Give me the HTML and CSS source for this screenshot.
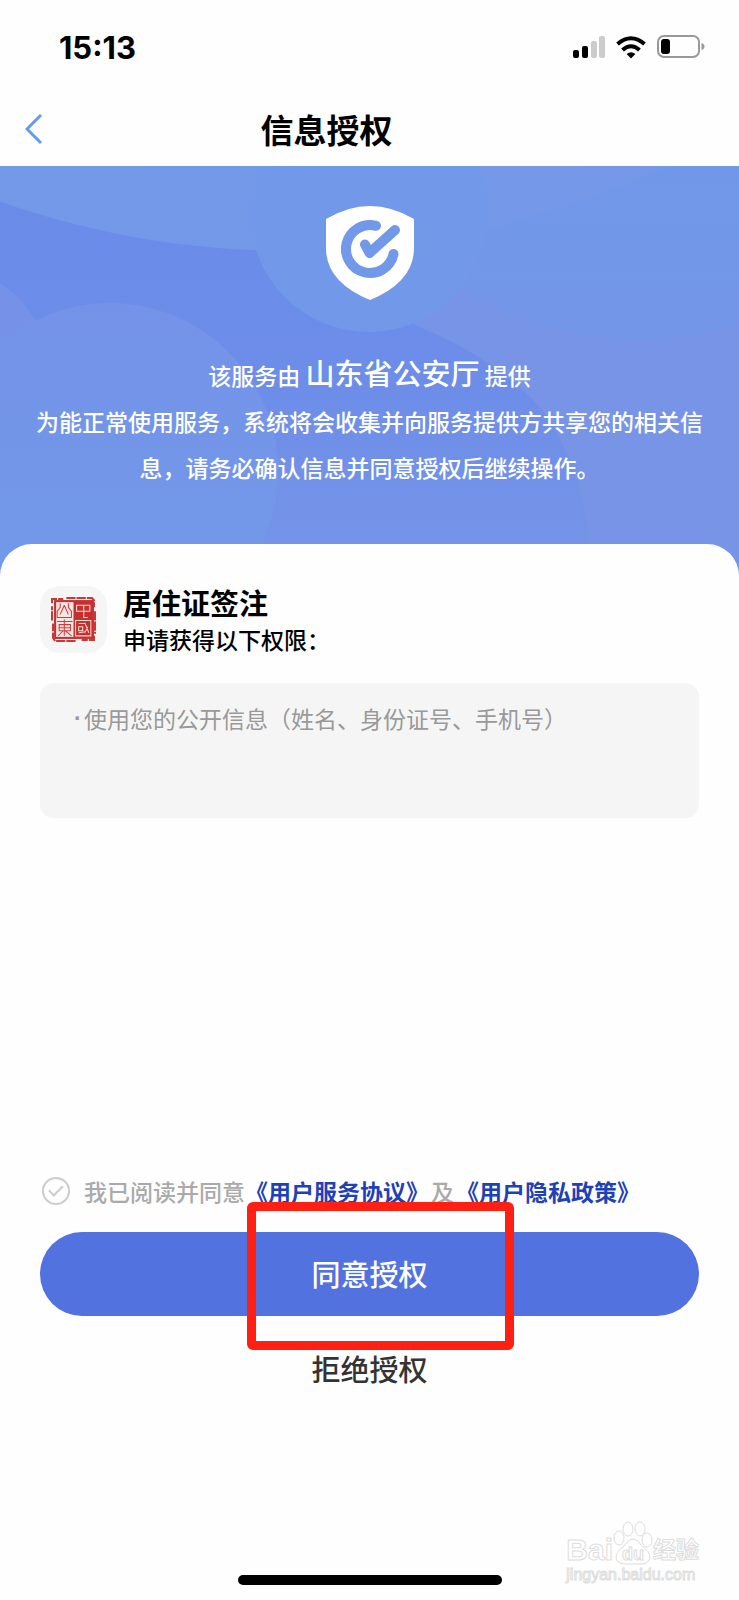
FILE: index.html
```
<!DOCTYPE html>
<html lang="zh-CN">
<head>
    <meta charset="utf-8">
    <meta name="viewport" content="width=device-width, initial-scale=1">
    <title>信息授权</title>
    <link rel="stylesheet" href="styles.css">
</head>
<body>

<div class="statusbar">
    <span class="time">15:13</span>
    <div class="status-icons">
        <svg class="signal" viewBox="0 0 32 22" aria-hidden="true">
            <rect x="0" y="14" width="6" height="8" rx="2"/>
            <rect x="9" y="10" width="6" height="12" rx="2"/>
            <rect class="off" x="18" y="5" width="6" height="17" rx="2"/>
            <rect class="off" x="26" y="0" width="6" height="22" rx="2"/>
        </svg>
        <svg class="wifi" viewBox="0 0 30 23" aria-hidden="true">
            <path d="M1.500 8Q15 -3.500 28.500 8" />
            <path d="M6.500 14Q15 6.500 23.500 14" />
            <path class="dot" d="M15 22.500L10.600 18Q15 14.500 19.400 18Z" />
        </svg>
        <svg class="battery" viewBox="0 0 48 24" aria-hidden="true">
            <rect class="case" x="1" y="1" width="41" height="21" rx="6"/>
            <rect x="4" y="4" width="9" height="15" rx="3"/>
            <path class="tip" d="M44.500 8Q47.500 9 47.500 11.500Q47.500 14 44.500 15Z"/>
        </svg>
    </div>
</div>

<header class="navbar">
    <button class="back" type="button" aria-label="返回">
        <svg viewBox="0 0 18 30"><path d="M16 1L2 15L16 29"/></svg>
    </button>
    <h1 class="title">信息授权</h1>
</header>

<section class="hero">
    <svg class="hero-bg" viewBox="0 0 739 412" preserveAspectRatio="xMidYMid slice" aria-hidden="true">
        <defs>
            <linearGradient id="band" x1="0" y1="0" x2="0" y2="1">
                <stop offset="0" stop-color="#6b8be8"/>
                <stop offset="0.5" stop-color="#6c8de8"/>
                <stop offset="1" stop-color="#7795e8"/>
            </linearGradient>
            <linearGradient id="ball" x1="0" y1="0" x2="0" y2="1">
                <stop offset="0" stop-color="#7493e8"/>
                <stop offset="1" stop-color="#7299e9"/>
            </linearGradient>
            <linearGradient id="sky" x1="0" y1="0" x2="1" y2="0">
                <stop offset="0" stop-color="#729ae9"/>
                <stop offset="1" stop-color="#7796e8"/>
            </linearGradient>
            <linearGradient id="right" x1="0" y1="0" x2="0" y2="1">
                <stop offset="0.480" stop-color="#7795e8"/>
                <stop offset="0.750" stop-color="#7098e9"/>
                <stop offset="1" stop-color="#7496e8"/>
            </linearGradient>
        </defs>
        <rect width="739" height="412" fill="#7794e7"/>
        <path d="M0 0H300L415 160Q500 195 542 245Q590 310 590 412H0Z" fill="url(#band)"/>
        <circle cx="-60" cy="210" r="110" fill="#7591e8"/>
        <circle cx="110" cy="306" r="168" fill="url(#ball)"/>
        <circle cx="640" cy="-160" r="334" fill="url(#right)"/>
        <circle cx="290" cy="-790" r="876" fill="url(#sky)"/>
        <circle cx="369" cy="48" r="119" fill="#7298e9"/>
    </svg>
    <svg class="shield" viewBox="0 0 88 94" aria-hidden="true">
        <path class="plate" d="M44 0Q66 0 88 13V42Q88 76 44 94Q0 76 0 42V13Q22 0 44 0Z"/>
        <path class="mark" d="M50 19.800A24 24 0 1 0 67.500 48"/>
        <path class="mark" d="M39 38.500L43.500 47L69 24"/>
    </svg>
    <p class="provider">该服务由 <strong>山东省公安厅</strong> 提供</p>
    <p class="notice">为能正常使用服务，系统将会收集并向服务提供方共享您的相关信息，请务必确认信息并同意授权后继续操作。</p>
</section>

<main class="sheet">
    <div class="service">
        <div class="service-icon">
            <svg viewBox="0 0 44 44" aria-hidden="true">
                <path class="frame" d="M1 6V2H12M15 1H40L42 3V10M43 14V36M42 38V42H30M24 43H4L2 40V26M1 23V9" />
                <rect class="red" x="3" y="3" width="39" height="38"/>
                <rect class="paper" x="5" y="5" width="17" height="34"/>
                <path class="ink" d="M9 6V10L6 14V20H20V14L17 10V6M13 8L9 17M13 8L17 17M6 24H21M13 22V38M8 27H19V33H8ZM8 30H19M12 33L7 38M14 33L20 38"/>
                <path class="cut" d="M25 8H38V14H25ZM32 8V20H36M24 23H39V38H24ZM27 26H33M27 29H31V33H27ZM27 35L34 34M33 25L37 35M36 29L33 35"/>
            </svg>
        </div>
        <div>
            <h2 class="service-name">居住证签注</h2>
            <p class="service-sub">申请获得以下权限：</p>
        </div>
    </div>

    <ul class="scopes">
        <li>使用您的公开信息（姓名、身份证号、手机号）</li>
    </ul>

    <div class="agree">
        <input type="checkbox" id="agree">
        <label for="agree">我已阅读并同意</label><a href="#">《用户服务协议》</a><span class="and">及</span><a href="#">《用户隐私政策》</a>
    </div>

    <div class="actions">
        <button class="btn accept" type="button">同意授权</button>
        <button class="btn refuse" type="button">拒绝授权</button>
        <div class="highlight"></div>
    </div>
</main>

<div class="watermark">
    <div class="wm-logo">
        <span>Bai</span>
        <span class="paw">
            <svg viewBox="0 0 40 44" aria-hidden="true">
                <ellipse cx="6" cy="17" rx="5" ry="7"/>
                <ellipse cx="15" cy="8" rx="5" ry="7"/>
                <ellipse cx="27" cy="8" rx="5" ry="7"/>
                <ellipse cx="34" cy="19" rx="5" ry="7"/>
                <path d="M20 18Q25 18 28 24Q37 31 37 36Q36 43 28 43H11Q3 42 3 36Q3 31 12 24Q15 18 20 18Z"/>
            </svg>
            <em>du</em>
        </span>
        <span class="wm-cn">经验</span>
    </div>
    <div class="wm-url">jingyan.baidu.com</div>
</div>
<div class="home-bar"></div>

</body>
</html>
```
FILE: styles.css
```
* {
    box-sizing: border-box;
}

body {
    margin: 0;
    min-height: 100vh;
    position: relative;
    display: flex;
    flex-direction: column;
    background-color: #fefefe;
    font-family: "Noto Sans CJK SC", sans-serif;
    font-size: 23px;
    font-weight: 500;
    color: #000;
}

h1, h2, p, ul {
    margin: 0;
    padding: 0;
}

button {
    border: none;
    padding: 0;
    background: none;
    font-family: inherit;
    font-weight: 500;
    cursor: pointer;
}

a {
    color: #1f41b6;
    text-decoration: none;
    font-weight: 700;
}

/* Status bar */
.statusbar {
    height: 94px;
    padding: 0 34px 0 59px;
    display: flex;
    justify-content: space-between;
    align-items: center;
}

.time {
    font-family: Inter, sans-serif;
    font-size: 31px;
    font-weight: 700;
}

.status-icons {
    display: flex;
    align-items: center;
    gap: 11px;
}

.signal {
    width: 32px;
    height: 22px;
}

.signal .off {
    fill: #ccc;
}

.wifi {
    width: 30px;
    height: 23px;
    fill: none;
    stroke: #000;
    stroke-width: 4;
}

.wifi .dot {
    fill: #000;
    stroke: none;
}

.battery {
    width: 48px;
    height: 24px;
}

.battery .case {
    fill: none;
    stroke: #999;
    stroke-width: 2;
}

.battery .tip {
    fill: #999;
}

/* Title bar */
.navbar {
    height: 72px;
    padding: 0 25px 2px;
    display: flex;
    align-items: center;
}

.back {
    width: 18px;
    height: 30px;
}

.back svg {
    display: block;
    fill: none;
    stroke: #619af2;
    stroke-width: 3;
}

.title {
    flex: 1;
    padding-right: 104px;
    text-align: center;
    font-size: 33px;
    font-weight: 700;
}

/* Blue banner */
.hero {
    position: relative;
    padding: 40px 30px 86px;
    display: flex;
    flex-direction: column;
    align-items: center;
    color: #fff;
    text-align: center;
    line-height: 46px;
}

.hero-bg {
    position: absolute;
    top: 0;
    left: 0;
    width: 100%;
    height: 100%;
}

.shield {
    position: relative;
    width: 88px;
    height: 94px;
    margin-bottom: 49px;
}

.shield .plate {
    fill: #fff;
}

.shield .mark {
    fill: none;
    stroke: #7298e9;
    stroke-width: 10;
    stroke-linecap: round;
    stroke-linejoin: round;
}

.provider, .notice {
    position: relative;
}

.provider strong {
    font-size: 29px;
    font-weight: 500;
}

/* White sheet over the banner */
.sheet {
    position: relative;
    flex: 1;
    margin-top: -32px;
    padding: 38px 40px 0;
    border-radius: 32px 32px 0 0;
    background-color: #fefefe;
}

.service {
    display: flex;
    align-items: center;
    gap: 16px;
}

.service-icon {
    width: 67px;
    height: 67px;
    padding: 11px;
    border-radius: 20px;
    background-color: #f5f5f5;
}

.service-icon svg {
    display: block;
    fill: none;
}

.service-icon .frame {
    stroke: #c43a38;
    stroke-width: 2;
    stroke-dasharray: 9 1;
}

.service-icon .red {
    fill: #c5302e;
}

.service-icon .paper {
    fill: #f7e4e2;
}

.service-icon .ink {
    stroke: #c5403e;
}

.service-icon .cut {
    stroke: #f7dcda;
}

.service-name {
    font-size: 29px;
    font-weight: 700;
    line-height: 40px;
}

.service-sub {
    line-height: 34px;
}

.scopes {
    min-height: 135px;
    margin-top: 27px;
    padding: 18px 34px;
    border-radius: 14px;
    background-color: #f5f5f5;
    color: #999;
    list-style: none;
    font-weight: 400;
    line-height: 34px;
}

.scopes li {
    display: flex;
}

.scopes li::before {
    content: "·";
    width: 10px;
    font-family: "Liberation Sans", sans-serif;
    font-weight: 700;
}

/* Agreement line */
.agree {
    margin-top: 356px;
    display: flex;
    align-items: center;
    line-height: 34px;
}

.agree input {
    appearance: none;
    width: 28px;
    height: 28px;
    margin: 0 14px 0 2px;
    border: 2px solid #ccc;
    border-radius: 50%;
    display: grid;
    place-items: center;
}

.agree input::before {
    content: "";
    width: 12px;
    height: 6px;
    margin-bottom: 4px;
    border-left: 2px solid #ccc;
    border-bottom: 2px solid #ccc;
    transform: rotate(-45deg);
}

.agree label, .agree .and {
    color: #aaa;
}

.agree .and {
    padding: 0 2px;
}

/* Buttons */
.actions {
    position: relative;
    margin-top: 24px;
    display: flex;
    flex-direction: column;
}

.btn {
    padding-bottom: 2px;
    font-size: 29px;
}

.accept {
    height: 84px;
    border-radius: 42px;
    background-color: #5272df;
    color: #fff;
}

.refuse {
    height: 60px;
    margin-top: 23px;
    color: #333;
}

.highlight {
    position: absolute;
    top: -30px;
    left: 207px;
    width: 267px;
    height: 148px;
    border: 9px solid #ff2014;
    border-radius: 6px;
    pointer-events: none;
}

/* Watermark */
.watermark {
    position: absolute;
    right: 40px;
    bottom: 15px;
    color: #fff;
    font-family: "Liberation Sans", "Noto Sans CJK SC", sans-serif;
    font-weight: 700;
    -webkit-text-stroke: 1px #ddd;
}

.wm-logo {
    display: flex;
    align-items: flex-end;
    font-size: 30px;
    line-height: 30px;
}

.wm-cn {
    font-size: 23px;
}

.paw {
    position: relative;
    width: 40px;
    height: 44px;
}

.paw svg {
    display: block;
    fill: #fefefe;
    stroke: #ddd;
}

.paw em {
    position: absolute;
    left: 0;
    right: 0;
    bottom: 0;
    font-size: 18px;
    line-height: 22px;
    text-align: center;
    font-style: normal;
}

.wm-url {
    font-size: 16px;
    font-weight: 400;
    line-height: 20px;
}

/* Home indicator */
.home-bar {
    position: absolute;
    bottom: 15px;
    left: 50%;
    width: 264px;
    height: 10px;
    margin-left: -132px;
    border-radius: 5px;
    background-color: #000;
}
```
